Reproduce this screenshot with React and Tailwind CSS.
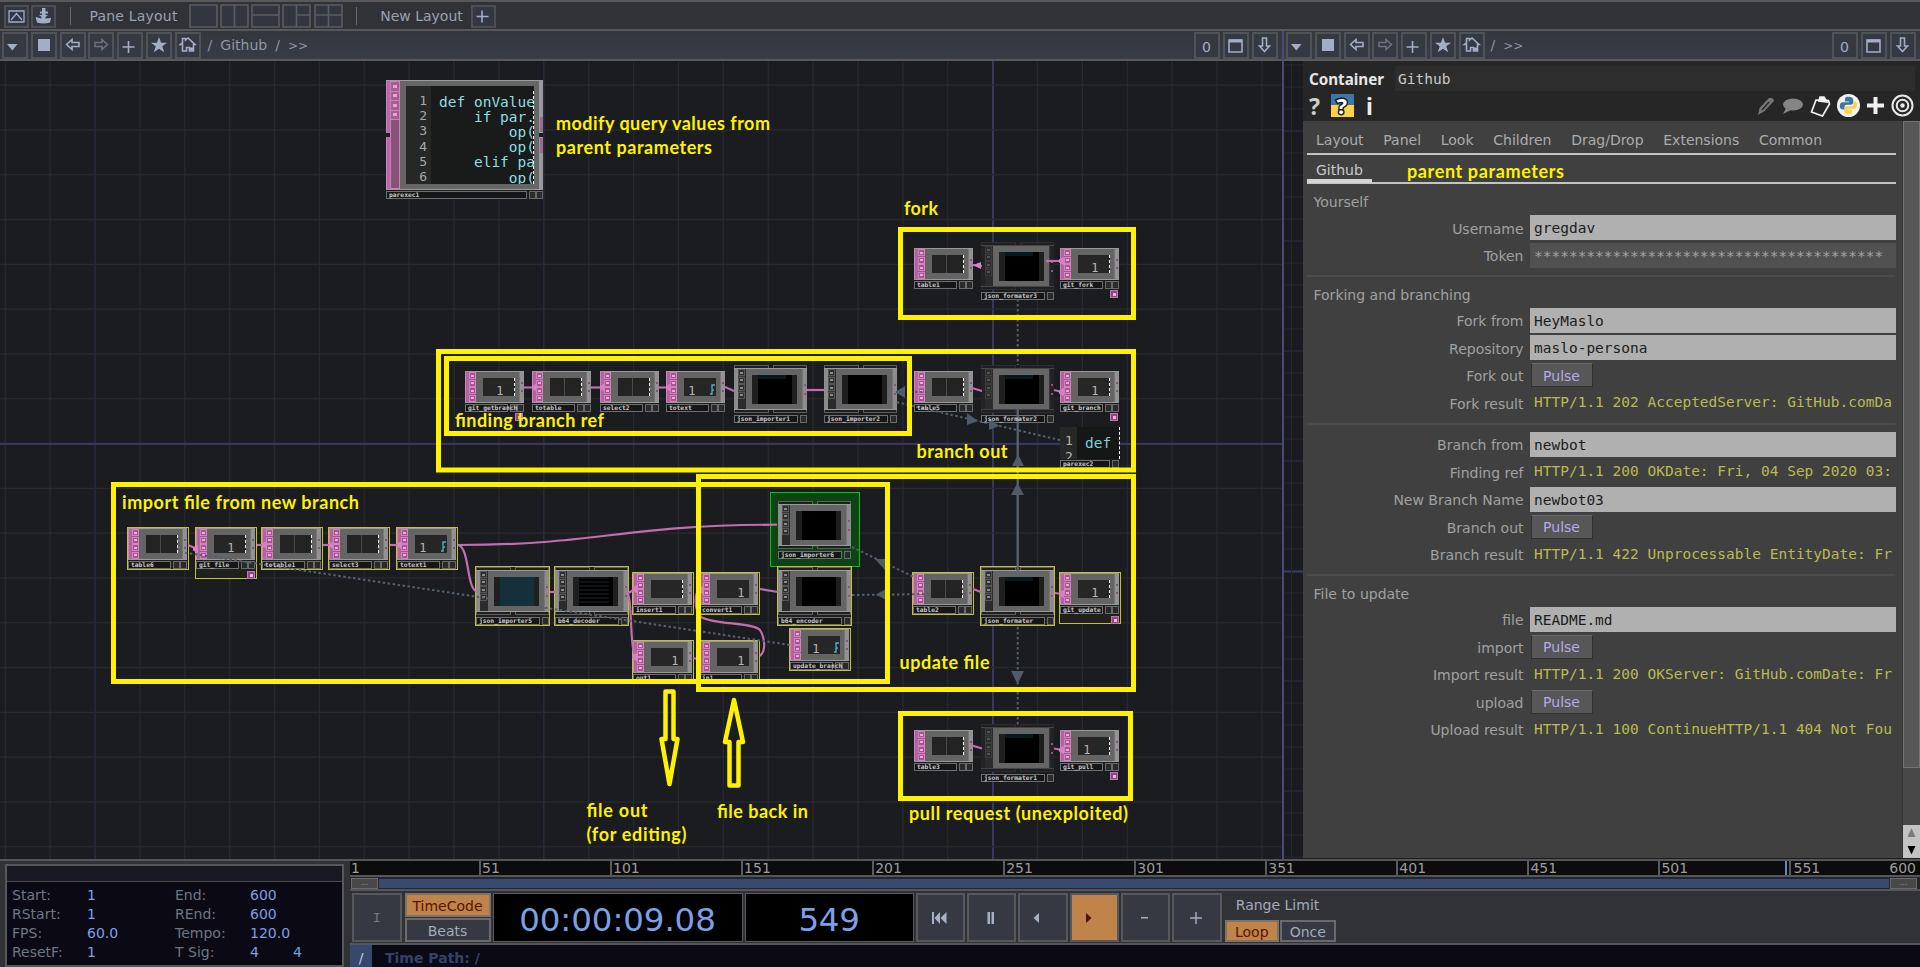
import React from "react";

const SANS = "font-['DejaVu_Sans',sans-serif]";
const MONO = "font-['DejaVu_Sans_Mono',monospace]";

/* ---------- toolbar pieces ---------- */

function Btn({ children, className = "" }) {
  return (
    <div className={`flex h-[27px] w-[26px] shrink-0 items-center justify-center border-2 border-[#50525a] bg-[#363942] text-[#a3adc6] ${className}`}>
      {children}
    </div>
  );
}

const Ico = ({ children, w = 20, h = 20 }) => (
  <svg width={w} height={h} viewBox={`0 0 ${w} ${h}`} className="block shrink-0" fill="none" stroke="currentColor" strokeWidth="1.6">
    {children}
  </svg>
);

const TriDown = () => <Ico><path d="M2 9h10.500l-5.200 6.500z" fill="currentColor" stroke="none" /></Ico>;
const Square = () => <Ico><path d="M4 4h12v12H4z" fill="currentColor" stroke="none" /></Ico>;
const ArrowL = () => <Ico><path d="M3.5 9.500l5.500-5v3H16v4H9v3z" /></Ico>;
const ArrowR = () => <Ico><path d="M16.500 9.500L11 4.500v3H4v4h7v3z" stroke="#6c7180" /></Ico>;
const ArrowD = () => <Ico><path d="M9.500 16.500l-5-5.500h3V3h4v8h3z" /></Ico>;
const Plus = () => <Ico><path d="M8.500 6v12M2.500 12h12" /></Ico>;
const Star = () => <Ico><path d="M10 2l2.100 5.700h6l-4.800 3.600 1.900 6L10 13.700 4.800 17.300l1.900-6L1.900 7.700h6z" fill="currentColor" stroke="none" /></Ico>;
const Home = () => <Ico><path d="M4.500 9.500V16h4v-3.500h3V16h4V9.500h1.500L10 3 7.500 5V3.500h-3V8l-2 1.500z" /><path d="M12 12.500h3.500v3H12z" fill="currentColor" stroke="none" /></Ico>;
const Win = () => <Ico><path d="M3 5h13v12H3z" /><path d="M3 6h13" strokeWidth="3" /></Ico>;
const Zero = () => <span className="pt-[3px] pr-[2px] text-[14px] leading-none font-['DejaVu_Sans',sans-serif]">0</span>;

function PathBar({ className, children }) {
  return (
    <div className={`flex h-[30px] items-center justify-between border-b-2 border-[#5a5a5c] bg-gradient-to-b from-[#33363c] to-[#393c45] ${className}`}>
      <div className="flex items-center gap-[2.800px]">
        <Btn><TriDown /></Btn>
        <Btn><Square /></Btn>
        <Btn><ArrowL /></Btn>
        <Btn><ArrowR /></Btn>
        <Btn><Plus /></Btn>
        <Btn><Star /></Btn>
        <Btn><Home /></Btn>
        {children}
      </div>
      <div className="flex items-center gap-[2.800px]">
        <Btn><Zero /></Btn>
        <Btn><Win /></Btn>
        <Btn><ArrowD /></Btn>
      </div>
    </div>
  );
}

const LayoutIcon = ({ d }) => (
  <svg width="29" height="24" viewBox="0 0 29 24" className="block" fill="#33363e" stroke="#5a5c60" strokeWidth="1.600">
    <path d="M1 1h27v22H1z" />
    <path d={d} fill="none" />
  </svg>
);

function TopBar() {
  return (
    <div className="flex h-[31px] items-center border-t-2 border-b-2 border-[#58585a] bg-[#313236] pt-px pl-[4px] text-[14px] text-[#9ba1b1]">
      <div className="flex gap-[2px]">
        <div className="flex h-[23px] w-[25px] items-center justify-center border-2 border-[#4c4e54] bg-[#34373f] text-[#a3adc6]">
          <svg width="17" height="13" viewBox="0 0 17 13" fill="none" stroke="currentColor" strokeWidth="1.300">
            <path d="M1 1h15v11H1zM3 10l5.500-6.500L14 10" />
          </svg>
        </div>
        <div className="flex h-[23px] w-[25px] items-center justify-center border-2 border-[#4c4e54] bg-[#34373f] text-[#a3adc6]">
          <svg width="17" height="16" viewBox="0 0 17 16" fill="currentColor">
            <path d="M7 0h3.500v3.500H13v2h-2.500V7H13l-2.500 2v1.500L16 10l-1 4.500q-6.500 2-13 0L0.500 9l6 1.500V9L4 7h3V5.500H5v-2h2z" />
          </svg>
        </div>
      </div>
      <div className="ml-[14px] h-[18px] w-px bg-[#66686e]" />
      <span className="ml-[18.500px] w-[99px] whitespace-nowrap tracking-[0.200px]">Pane Layout</span>
      <div className="flex gap-[2.300px]">
        <LayoutIcon d="" />
        <LayoutIcon d="M14.500 1v22" />
        <LayoutIcon d="M1 11h27" />
        <LayoutIcon d="M14.500 1v22M14.500 11H28" />
        <LayoutIcon d="M14.500 1v22M1 11h27" />
      </div>
      <div className="ml-[13px] h-[18px] w-px bg-[#66686e]" />
      <span className="ml-[23.500px] w-[90.500px] whitespace-nowrap">New Layout</span>
      <div className="flex h-[23px] w-[25px] items-center justify-center border-2 border-[#4c4e54] bg-[#34373f] text-[#a3adc6]">
        <svg width="14" height="14" viewBox="0 0 14 14" stroke="currentColor" strokeWidth="1.600"><path d="M6 1.500v12M0.500 7.500h12" /></svg>
      </div>
    </div>
  );
}

/* ---------- network editor ---------- */

const range = (n) => Array.from({ length: n }, (_, i) => i);

function Grid() {
  return (
    <svg width="1282" height="798" viewBox="0 61 1282 798" className="absolute inset-0">
      {range(29).map((i) => (
        <rect key={"v" + i} x={4.600 + i * 44.880} y="61" width={i === 22 ? 2 : 1.300} height="798" fill={i === 22 ? "#383860" : i % 10 === 2 ? "#2c2c44" : "#28292f"} />
      ))}
      {range(18).map((i) => (
        <rect key={"h" + i} x="0" y={84.500 + i * 44.800} width="1282" height={i === 8 ? 2 : 1.300} fill={i === 8 ? "#393964" : "#28292f"} />
      ))}
    </svg>
  );
}

function FlagCells({ pink, h = 32 }) {
  return (
    <div className={`flex w-[7px] flex-col justify-around ${pink ? "bg-[#a3578f]" : "bg-[#3a3a3a]"}`} style={{ height: h }}>
      {range(4).map((i) => (
        <div key={i} className={`flex h-[7px] w-[7px] items-center justify-center border ${pink ? "border-[#d681c2] bg-[#a3578f]" : "border-[#565656] bg-[#2d2d2d]"}`}>
          <div className={`h-[2px] w-[3px] ${pink ? "bg-[#efa6dd]" : "bg-[#8a8a8a]"}`} />
        </div>
      ))}
    </div>
  );
}

function NameBar({ name, w, single }) {
  return (
    <div className="flex h-[8px] justify-between" style={{ width: w }}>
      <div className="h-[8px] w-0 flex-1 border border-[#6f6f6f] bg-[#161618] pl-[2px]">
        <div className={`relative z-10 text-[6.300px] leading-[5px] font-bold whitespace-nowrap text-[#c9c9c9] ${MONO}`}>{name}</div>
      </div>
      <div className="ml-[2px] h-[8px] w-[7px] border border-[#6a6a6a] bg-[#2a2a2a]" />
      {!single && <div className="h-[8px] w-[7px] border border-[#6a6a6a] bg-[#2a2a2a]" />}
    </div>
  );
}

function Screen({ type }) {
  if (type === "table")
    return (
      <div className="flex h-[18px] w-[32px] gap-px bg-[#4a4a4a]">
        <div className="h-full w-[14px] bg-[#232323]" />
        <div className="h-full flex-1 bg-[#232323]" />
        <div className="-ml-px h-full border-l border-dashed border-white" />
      </div>
    );
  return (
    <div className={`flex h-[18px] w-[32px] items-end justify-end bg-[#262626] text-[12px] leading-[9px] text-[#b8b8b8] ${MONO}`}>
      {type === "one" && <span className="mr-[10px]">1</span>}
      {type === "oneMid" && <span className="mr-[18px]">1</span>}
      {type === "onePlain" && <span className="mr-[4px]">1</span>}
      {type === "cyan" && (
        <>
          <span className="mr-[13px]">1</span>
          <svg width="6" height="12" viewBox="0 0 6 12" fill="none" stroke="#4fb7c9" strokeWidth="1.300" className="mr-px self-end"><path d="M6 1H3v4M5 6H3v4H1" /></svg>
        </>
      )}
      {(type === "one" || type === "oneMid" || type === "blank") && <span className="h-full border-l border-dashed border-white" />}
    </div>
  );
}

function DatNode({ n }) {
  const body = (
    <div className="w-[59px]">
      <div className="mb-px flex h-[32px] w-[59px] border-t border-b border-[#9a9a9a] bg-[#646464]">
        <div className="h-[30px] w-[4px] border-l border-[#d37fc0] bg-[#b065a0]" />
        <FlagCells pink h={30} />
        <div className="flex flex-1 items-center justify-center pl-[2px]"><Screen type={n.type} /></div>
        <div className="h-[30px] w-[5px] border-l border-[#777] bg-[#929292] pt-[10px]">
          <div className="ml-px h-[2px] w-[2px] bg-[#8b4f7b]" />
          <div className="mt-[6px] ml-px h-[2px] w-[2px] bg-[#8b4f7b]" />
        </div>
      </div>
      <NameBar name={n.name} w={59} />
    </div>
  );
  return (
    <>
      {n.sel ? (
        <div className="absolute border border-[#c4c131] bg-[#20211e]" style={{ left: n.x - 2, top: n.y - 63, width: 62, height: n.badge ? 52 : 43 }}>
          {body}
        </div>
      ) : (
        <div className="absolute" style={{ left: n.x, top: n.y - 61 }}>{body}</div>
      )}
      {n.badge && (
        <div className="absolute flex h-[8px] w-[8px] items-center justify-center border border-[#c276b0] bg-[#8a4c7c]" style={{ left: n.x + 50, top: n.y + 42 - 61 }}>
          <div className="h-[3px] w-[3px] bg-[#f0b2e2]" />
        </div>
      )}
    </>
  );
}

function CompNode({ n }) {
  const side = n.dark ? "bg-[#232325] border-[#343436]" : "bg-[#8c8c8c] border-[#777]";
  const cap = n.dark ? "border-[#2e2e30] bg-[#1f1f21]" : "border-[#5e5e5e] bg-[#1f1f21]";
  const body = (
    <div className="w-[73px]">
      <div className="flex h-[3px] gap-[4px]">
        <div className={`h-[3px] flex-1 border border-b-0 ${cap}`} />
        <div className={`h-[3px] flex-1 border border-b-0 ${cap}`} />
      </div>
      <div className={`flex h-[42px] border-t border-b ${n.dark ? "border-[#454547] bg-[#2b2b2d]" : "border-[#9a9a9a] bg-[#2b2b2d]"}`}>
        <div className={`h-full w-[4px] ${side}`} />
        <div className="w-[8px]">{n.dark ? <div className="h-[28px] opacity-40"><FlagCells h={30} /></div> : <FlagCells h={30} />}</div>
        <div className="flex flex-1 items-center justify-center bg-[#656565]">
          <div className="flex h-[29px] w-[45px] items-center justify-center bg-[#1f1f1f]">
            <div className={`ml-[2px] h-[29px] w-[34px] ${n.fill === "teal" ? "bg-[#14303a]" : "bg-black"}`}>
              {n.fill === "hint" && <div className="h-[4px] w-[28px] bg-[#08191e]" />}
              {n.fill === "text" && <div className="h-[26px] w-[30px] bg-[repeating-linear-gradient(#0d1317_0_2px,#000_2px_4px)]" />}
            </div>
          </div>
        </div>
        <div className={`flex h-full w-[5px] flex-col items-center justify-center gap-[7px] border-l ${side}`}>
          <div className="h-[2px] w-[2px] bg-[#9a4f86]" />
          <div className="h-[2px] w-[2px] bg-[#9a4f86]" />
        </div>
      </div>
      <div className="mb-[2px] flex h-[3px] gap-[4px]">
        <div className={`h-[3px] flex-1 border border-t-0 ${cap}`} />
        <div className={`h-[3px] flex-1 border border-t-0 ${cap}`} />
      </div>
      <NameBar name={n.name} w={73} single />
    </div>
  );
  if (n.sel)
    return (
      <div className="absolute h-[60px] w-[75px] border border-[#c4c131] bg-[#20211e]" style={{ left: n.x - 1, top: n.y - 62 }}>{body}</div>
    );
  if (n.green)
    return (
      <div className="absolute h-[75px] w-[90px] border border-[#06c414] bg-[#0c4413] pt-[8px] pl-[7px]" style={{ left: n.x - 8, top: n.y - 69 }}>{body}</div>
    );
  return <div className="absolute" style={{ left: n.x, top: n.y - 61 }}>{body}</div>;
}

const DATS = [
  { name: "table1", x: 914, y: 248, type: "table" },
  { name: "git_fork", x: 1060, y: 248, type: "one", badge: true },
  { name: "table5", x: 914, y: 371, type: "table" },
  { name: "git_branch", x: 1060, y: 371, type: "one", badge: true },
  { name: "git_getbranch", x: 465, y: 371, type: "one", badge: true },
  { name: "totable", x: 532, y: 371, type: "table" },
  { name: "select2", x: 600, y: 371, type: "table" },
  { name: "totext", x: 666, y: 371, type: "cyan" },
  { name: "table6", x: 129, y: 529, type: "table", sel: true },
  { name: "git_file", x: 197, y: 529, type: "one", sel: true, badge: true },
  { name: "totable1", x: 263, y: 529, type: "table", sel: true },
  { name: "select3", x: 330, y: 529, type: "table", sel: true },
  { name: "totext1", x: 398, y: 529, type: "cyan", sel: true },
  { name: "insert1", x: 634, y: 574, type: "blank", sel: true },
  { name: "convert1", x: 700, y: 574, type: "onePlain", sel: true },
  { name: "out1", x: 634, y: 642, type: "onePlain", sel: true },
  { name: "in1", x: 700, y: 642, type: "onePlain", sel: true },
  { name: "update_branch", x: 791, y: 630, type: "cyan", sel: true },
  { name: "table2", x: 914, y: 574, type: "table", sel: true },
  { name: "git_update", x: 1061, y: 574, type: "one", sel: true, badge: true },
  { name: "table3", x: 914, y: 730, type: "table" },
  { name: "git_pull", x: 1060, y: 730, type: "oneMid", badge: true },
];

const COMPS = [
  { name: "json_formater3", x: 981, y: 242, dark: true, fill: "hint" },
  { name: "json_formater2", x: 981, y: 365, dark: true, fill: "hint" },
  { name: "json_importer1", x: 734, y: 365, fill: "hint" },
  { name: "json_importer2", x: 824, y: 365 },
  { name: "json_importer5", x: 476, y: 567, sel: true, fill: "teal" },
  { name: "b64_decoder", x: 555, y: 567, sel: true, fill: "text" },
  { name: "json_importer6", x: 778, y: 500, green: true },
  { name: "b64_encoder", x: 778, y: 567, sel: true },
  { name: "json_formater", x: 981, y: 567, sel: true, fill: "hint" },
  { name: "json_formater1", x: 981, y: 724, dark: true, fill: "hint" },
];

const PINK_WIRES = [
  "M972 265L982 266", "M1046 261H1061", "M972 388L982 391", "M1054 390L1062 392",
  "M524 387.500H535", "M591 387.500H602", "M659 387.500H669", "M725 387L734 391", "M806 390H824",
  "M188 545L197 549", "M257 545H265", "M323 545H332", "M390 545H400",
  "M458 545C600 545 620 525 777 524.700",
  "M458 545C470 548 466 588 477 592",
  "M550 592H556", "M627 594L635 589", "M628 594C632 600 630 650 635 656",
  "M693 658L702 660",
  "M760 656C767 650 764 636 760 630C752 622 715 625 701 617C694 610 694 592 700 589",
  "M760 589L778 592", "M973 589L981 592", "M1055 593L1062 594",
  "M972 745.500L982 748.500", "M1054 748.500L1062 750",
];

function Wires() {
  return (
    <svg width="1282" height="798" viewBox="0 61 1282 798" className="absolute inset-0" fill="none">
      {PINK_WIRES.map((d) => <path key={d} d={d} stroke="#c06fae" strokeWidth="2.200" />)}
      <path d="M973 265l8-3v7z" fill="#d781c4" />
      {[[1064, 261], [1064, 392], [537, 387.500], [605, 387.500], [671, 387.500], [198, 549], [267, 545], [334, 545], [402, 545], [1064, 594], [1064, 750], [637, 589], [637, 657], [703, 590]].map(([x, y]) => (
        <path key={x + "-" + y} d={`M${x - 5} ${y - 1.5}L${x} ${y - 4}v8L${x - 5} ${y + 1.5}z`} fill="#d781c4" />
      ))}
      <g stroke="#55606e" strokeWidth="2" strokeDasharray="2.500 2.500">
        <path d="M1017.700 299V365M1017.700 627V725" />
        <path d="M1060 440L896 402M910 392H932" />
        <path d="M180 552L492 599M540 607L790 645" />
        <path d="M852 547L914 577M852 595L932 594" />
      </g>
      <path d="M1017.700 405V571" stroke="#5a6675" strokeWidth="2.200" />
      <g fill="#4f5b6a">
        <path d="M1012 466h12l-6-12zM1011 495h13l-6.500-12zM1011 671h13l-6.500 13z" />
        <path d="M967 413v12l11-4zM989 418v12l10-4zM895 392l10-6v12z" />
        <path d="M875 559h11l-1 11zM876 594.500l9-5v10z" />
      </g>
    </svg>
  );
}

function ParExec1() {
  const lines = ["def onValue", "    if par.", "        op(", "        op(", "    elif pa", "        op("];
  return (
    <div className="absolute top-[19px] left-[386px] w-[157px]">
      <div className="mb-px flex h-[110px] border-t border-b border-[#9b9b9b] bg-[#666]">
        <div className="w-[4px] border-l border-[#cf7fbd] bg-[#b569a5]" />
        <div className="w-[10px] border border-[#d17fbe] bg-[#855377]">
          {range(4).map((i) => (
            <div key={i} className="flex h-[9.500px] items-center justify-center border-b border-[#d17fbe] bg-[#a3608f]">
              <div className="h-[3px] w-[4px] bg-[#e5a2d5]" />
            </div>
          ))}
        </div>
        <div className="flex flex-1 items-center pl-[6px]">
          <div className={`relative flex h-[98px] w-[128px] overflow-hidden bg-[#191a1a] text-[14.500px] leading-[15.200px] ${MONO}`}>
            <div className="w-[25px] shrink-0 bg-[#262727] pt-[7px] pr-[4px] text-right text-[13px] text-[#a9a9a9]">
              {lines.map((_, i) => <div key={i}>{i + 1}</div>)}
            </div>
            <div className="pt-[8.500px] pl-[8px] whitespace-pre text-[#8edfe2]">
              {lines.map((l, i) => <div key={i}>{l}</div>)}
            </div>
            <div className="absolute top-[5px] right-0 h-[93px] border-l border-dashed border-white" />
          </div>
        </div>
        <div className="flex w-[4px] flex-col items-center gap-[6px] bg-[#9a9a9a] pt-[36px]">
          <div className="h-[15px] w-[3px] bg-[#9a6a8d]" />
          <div className="h-[15px] w-[3px] bg-[#9a6a8d]" />
        </div>
      </div>
      <NameBar name="parexec1" w={157} />
      <div className="absolute top-[53px] left-0 h-[4px] w-[4px] bg-[#1b1c1f]" />
      <div className="absolute top-[53px] right-0 h-[4px] w-[4px] bg-[#1b1c1f]" />
    </div>
  );
}

function ParExec2() {
  return (
    <div className="absolute top-[366px] left-[1060px] h-[41px] w-[60px] overflow-hidden">
      <div className={`mb-px flex h-[32px] bg-[#151616] ${MONO}`}>
        <div className="h-[32px] w-[17px] shrink-0 overflow-hidden bg-[#262727] pt-[6px] pl-[5px] text-[13px] leading-[16px] text-[#b5b5b5]">
          <div>1</div>
          <div>2</div>
        </div>
        <div className="flex-1 pt-[6px] pl-[8px] text-[14.500px] leading-[20px] text-[#7fcfd4]">def</div>
        <div className="border-l border-dashed border-white" />
      </div>
      <NameBar name="parexec2" w={59} single />
    </div>
  );
}

const BOXES = [
  [898, 227, 238, 93], [436, 349, 700, 123.5], [444, 356, 468, 80],
  [111, 482, 779, 202], [696, 474, 440, 218], [898, 711, 235, 90],
];

const NOTES = [
  ["modify query values from", 556, 130, 214], ["parent parameters", 556, 154, 156], ["fork", 904, 215, 34],
  ["finding branch ref", 455, 427, 149], ["branch out", 916.5, 458, 91],
  ["import file from new branch", 122, 509, 237], ["update file", 899.5, 669, 90],
  ["pull request (unexploited)", 909, 820, 219], ["file out", 586.5, 817, 61],
  ["(for editing)", 586.5, 841, 100], ["file back in", 717, 818, 91],
];

function Annotations() {
  return (
    <svg width="1282" height="798" viewBox="0 61 1282 798" className="absolute inset-0 z-20" fill="none" stroke="#fff200">
      {BOXES.map(([x, y, w, h]) => <rect key={x + "-" + y} x={x + 2.5} y={y + 2.5} width={w - 5} height={h - 5} strokeWidth="5" />)}
      <path d="M665.500 691.500h8V739h4L669.500 784L661.500 739h4z" strokeWidth="4.500" strokeLinejoin="round" />
      <path d="M729.500 785.500h9V742h4.500L734 700L725 742h4.500z" strokeWidth="4.500" strokeLinejoin="round" />
      {NOTES.map(([t, x, y, w]) => (
        <text key={t + x + y} x={x} y={y} textLength={w} stroke="none" className="fill-[#fff200] font-['Lato',sans-serif] text-[18px] font-bold">{t}</text>
      ))}
    </svg>
  );
}

function Network() {
  return (
    <div className="relative h-[798px] w-[1282px] shrink-0 overflow-hidden bg-[#1b1c1f]">
      <Grid />
      <ParExec1 />
      {DATS.map((n) => <DatNode key={n.name} n={n} />)}
      {COMPS.map((n) => <CompNode key={n.name} n={n} />)}
      <ParExec2 />
      <div className="absolute top-[618px] left-[630px] z-10 h-[6px] w-[134px] bg-[#1b1c1f]" />
      <Wires />
      <Annotations />
    </div>
  );
}

/* ---------- parameter panel ---------- */

const SideGrid = () => (
  <svg width="19" height="797" viewBox="1284 62 19 797" className="block shrink-0 bg-[#1a1b20]">
    {range(37).map((i) => (
      <rect key={i} x="1284" y={65.5 + i * 22} width="19" height={i === 23 ? 2 : 1} fill={i === 23 ? "#3c3c66" : i % 5 === 3 ? "#2e2e4c" : "#26272d"} />
    ))}
    <rect x="1291" y="62" width="1" height="797" fill="#26272d" />
  </svg>
);

function Row({ label, children }) {
  return (
    <div className="flex h-[27.500px] items-center">
      <div className="w-[216.500px] shrink-0 pt-[2px] text-right leading-[20px] whitespace-nowrap">{label}</div>
      <div className="ml-[6.500px] w-[366px] shrink-0">{children}</div>
    </div>
  );
}

const Field = ({ v }) => (
  <Row label={v[0]}>
    <div className={`h-[25px] overflow-hidden bg-[#b0b0b0] pl-[4px] text-[14.500px] leading-[26px] text-[#1c1c1c] ${MONO}`}>{v[1]}</div>
  </Row>
);
const Result = ({ v }) => (
  <Row label={v[0]}>
    <div className={`pl-[4px] text-[14.500px] leading-[25px] whitespace-nowrap text-[#b9bb52] ${MONO}`}>{v[1]}</div>
  </Row>
);
const Pulse = ({ label }) => (
  <Row label={label}>
    <div className="ml-[0.500px] flex h-[24px] w-[62px] items-center justify-center border border-t-[#6b6b6b] border-r-[#303030] border-b-[#303030] border-l-[#303030] bg-[#575757] pt-[2px] text-[#b6a8ec]">Pulse</div>
  </Row>
);
const Sep = () => <div className="mt-[6px] h-[2px] w-[588px] bg-[#4b4b4b]" />;

function PyLogo({ size }) {
  return (
    <svg width={size} height={size} viewBox="0 0 24 24" className="block">
      <path d="M12 1C7 1 7.500 3.500 7.500 5v2H13v1H5C2 8 1 10 1 12.500S2.500 17 5 17h2v-3c0-2 1-3 3-3h5c1.500 0 3-1 3-3V5c0-3-2.500-4-6-4z" fill="#3a76a8" />
      <path d="M12 23c5 0 4.500-2.500 4.500-4v-2H11v-1h8c3 0 4-2 4-4.500S21.500 7 19 7h-1v3c0 2-1 3-3 3h-5c-1.500 0-3 1-3 3v3c0 3 2 4 5 4z" fill="#ffd24a" />
    </svg>
  );
}

function Params() {
  return (
    <div className="flex h-[797px] w-[617px] flex-col bg-[#404040] text-[14px] text-[#a0a0a0]">
      <div className="h-[60px] shrink-0 bg-[#262626]">
        <div className="flex h-[31px] items-center pt-[4px] pl-[6px]">
          <div className="w-[86px] pt-[2px] text-[15.200px] font-bold text-[#e6e6e6] font-['Noto_Sans',sans-serif]">Container</div>
          <div className={`h-[25px] w-[520px] bg-[#2d2d2d] pl-[3px] text-[14.500px] leading-[26px] text-[#c9c9c9] ${MONO}`}>Github</div>
        </div>
        <div className="flex h-[27px] items-center justify-between pr-[6px] pl-[6px]">
          <div className="flex items-center">
            <span className="w-[22px] text-[23px] leading-[24px] font-bold text-[#cfcfcf] font-['Noto_Sans',sans-serif]">?</span>
            <div className="flex h-[23px] w-[23px] items-center justify-center bg-gradient-to-b from-[#3b77a8] from-50% to-[#ffd24a] to-50%">
              <svg width="23" height="23" viewBox="0 0 23 23"><text x="5.500" y="19.500" strokeWidth="3" stroke="#1a1a1a" paintOrder="stroke" className="fill-white text-[22px] font-bold font-['Noto_Sans',sans-serif]">?</text></svg>
            </div>
            <span className="ml-[12px] text-[23px] leading-[24px] font-bold text-[#ededed] font-['Noto_Sans',sans-serif]">i</span>
          </div>
          <div className="flex items-center gap-[6px]">
            <svg width="18" height="20" viewBox="0 0 18 20" fill="#757575"><path d="M1 19l1.500-7L12 2q4-1 5 3L7 15.500z" /><path d="M5 14l7-8" stroke="#262626" strokeWidth="1.400" /></svg>
            <svg width="23" height="18" viewBox="0 0 23 18" fill="#858585"><ellipse cx="12" cy="7.500" rx="10" ry="6" /><path d="M5 11l-3 6 8-4z" /></svg>
            <svg width="21" height="22" viewBox="0 0 21 22" fill="none" stroke="#f0f0f0" strokeWidth="1.700"><path d="M6 5L1.500 17l11 4L19.500 9l-1-3.500z" /><path d="M9 6l1-4h4l3 5z" fill="#f0f0f0" /></svg>
            <div className="flex h-[23px] w-[23px] items-center justify-center rounded-full bg-[#f2f2f2]"><PyLogo size={19} /></div>
            <svg width="19" height="19" viewBox="0 0 19 19" stroke="#f0f0f0" strokeWidth="4"><path d="M9.500 1v17M1 9.500h17" /></svg>
            <svg width="23" height="23" viewBox="0 0 23 23" fill="none" stroke="#e8e8e8" strokeWidth="2"><circle cx="11.500" cy="11.500" r="10" /><circle cx="11.500" cy="11.500" r="5.800" /><circle cx="11.500" cy="11.500" r="2.200" fill="#e8e8e8" stroke="none" /></svg>
          </div>
        </div>
      </div>
      <div className="flex min-h-0 flex-1 justify-between">
        <div className="w-[593px] pl-[4px]">
          <div className="flex h-[34px] items-center gap-[19.700px] border-b-2 border-[#c4c4c4] pt-[6px] pl-[9px] text-[#acacac]">
            {["Layout", "Panel", "Look", "Children", "Drag/Drop", "Extensions", "Common"].map((t) => <span key={t}>{t}</span>)}
          </div>
          <div className="flex h-[29px] border-b-2 border-[#c4c4c4]">
            <div className="h-[28px] w-[65px] border-b-4 border-[#d4d4d4] pt-[5px] pl-[9px] text-[#c9c9c9]">Github</div>
            <div className="pt-[4px] pl-[34px]">
              <svg width="160" height="24" viewBox="0 0 160 24" className="block"><text x="1" y="19" textLength="157" className="fill-[#fff200] font-['Lato',sans-serif] text-[18px] font-bold">parent parameters</text></svg>
            </div>
          </div>
          <div className="pt-[8px] pl-[6.500px] leading-[20px]">Yourself</div>
          <div className="h-[2px]" />
          <Field v={["Username", "gregdav"]} />
          <Row label="Token">
            <div className={`h-[25px] overflow-hidden bg-[#515151] pl-[4px] text-[14.500px] leading-[26px] text-[#a4a4a4] ${MONO}`}>{"*".repeat(40)}</div>
          </Row>
          <Sep />
          <div className="h-[29.500px] pt-[8px] pl-[6.500px] leading-[20px]">Forking and branching</div>
          <Field v={["Fork from", "HeyMaslo"]} />
          <Field v={["Repository", "maslo-persona"]} />
          <Pulse label="Fork out" />
          <Result v={["Fork result", "HTTP/1.1 202 AcceptedServer: GitHub.comDa"]} />
          <Sep />
          <div className="h-[6px]" />
          <Field v={["Branch from", "newbot"]} />
          <Result v={["Finding ref", "HTTP/1.1 200 OKDate: Fri, 04 Sep 2020 03:"]} />
          <Field v={["New Branch Name", "newbot03"]} />
          <Pulse label="Branch out" />
          <Result v={["Branch result", "HTTP/1.1 422 Unprocessable EntityDate: Fr"]} />
          <Sep />
          <div className="h-[29.500px] pt-[8px] pl-[6.500px] leading-[20px]">File to update</div>
          <Field v={["file", "README.md"]} />
          <Pulse label="import" />
          <Result v={["Import result", "HTTP/1.1 200 OKServer: GitHub.comDate: Fr"]} />
          <Pulse label="upload" />
          <Result v={["Upload result", "HTTP/1.1 100 ContinueHTTP/1.1 404 Not Fou"]} />
        </div>
        <div className="flex w-[18px] flex-col justify-between border-l border-[#353535] bg-[#484848]">
          <div className="h-[647px] w-[17px] border border-[#747474] bg-[#575757]" />
          <div className="flex h-[33px] w-[17px] flex-col items-center justify-around bg-[#c3c3c3]">
            <svg width="11" height="10" viewBox="0 0 11 10"><path d="M5.500 0L9.500 9h-8z" fill="#7d7d7d" /></svg>
            <svg width="11" height="10" viewBox="0 0 11 10"><path d="M5.500 9.500L9.500 1h-8z" fill="#000" /></svg>
          </div>
        </div>
      </div>
    </div>
  );
}

/* ---------- timeline ---------- */

function Stats() {
  const rows = [["Start:", "1", "End:", "600"], ["RStart:", "1", "REnd:", "600"], ["FPS:", "60.0", "Tempo:", "120.0"], ["ResetF:", "1", "T Sig:", "4", "4"]];
  return (
    <div className="h-[108px] w-[350px] shrink-0 border-t-2 border-[#56565a] bg-[#313236] pt-[3px] pl-[5px]">
      <div className="h-[103px] w-[339px] border-2 border-[#58585a] bg-[#0b0a14]">
        <div className="h-[16px] border-b border-[#4c4c50] bg-[#191922]" />
        <div className="pt-[4px] pl-[5px] text-[14px] leading-[19.100px] text-[#6f7683]">
          {rows.map((r) => (
            <div key={r[0]} className="flex">
              <span className="w-[75px]">{r[0]}</span>
              <span className="w-[88px] text-[#7c9fe6]">{r[1]}</span>
              <span className="w-[75px]">{r[2]}</span>
              <span className="w-[43px] text-[#7c9fe6]">{r[3]}</span>
              <span className="text-[#7c9fe6]">{r[4]}</span>
            </div>
          ))}
        </div>
      </div>
    </div>
  );
}

function TBtn({ children, active }) {
  return (
    <div className={`flex h-[49px] w-[49.300px] items-center justify-center border-2 border-[#56585c] pr-[2px] pt-[2px] ${active ? "bg-[#c0834a] text-[#5a0d00]" : "bg-[#363941] text-[#a7b0c5]"}`}>{children}</div>
  );
}

function Timeline() {
  return (
    <div className="flex h-[108px] w-[1570px] flex-col">
      <div className="flex h-[18px] shrink-0 border-t-2 border-b-2 border-[#55555a] bg-[#0c0c0c] text-[14px] leading-[15px] text-[#9c9c9c]">
        <span className="w-[129px] pl-px">1</span>
        {["51", "101", "151", "201", "251", "301", "351", "401", "451", "501"].map((t) => (
          <span key={t} className="w-[131.050px] border-l-2 border-[#5c5c5c] pl-px">{t}</span>
        ))}
        <span className="-ml-[4px] mr-[2px] w-[2px] bg-[#6a86bb]" />
        <span className="flex flex-1 justify-between border-l-2 border-[#5c5c5c] pr-[4px] pl-[2px]"><span>551</span><span>600</span></span>
      </div>
      <div className="flex h-[14px] shrink-0 items-center justify-between border-b-2 border-[#55555a] bg-[#25262b] px-px">
        <div className="flex h-[11px] w-[27px] items-center justify-center border border-[#6a6a6a] bg-[#484848] text-[8px] leading-none text-[#8a8a8a]">...</div>
        <div className="mx-[1px] h-[9px] flex-1 bg-[#394a70]" />
        <div className="mr-[2px] flex h-[11px] w-[27px] items-center justify-center border border-[#6a6a6a] bg-[#484848] text-[8px] leading-none text-[#8a8a8a]">...</div>
      </div>
      <div className="flex h-[54px] shrink-0 items-center border-b-2 border-[#55555a] bg-[#313236] pl-[2px] text-[14px] text-[#a3a9b9]">
        <div className="flex h-[49px] w-[49.500px] items-center justify-center border-2 border-[#56585c] bg-[#363941] pt-[2px] text-[12px] text-[#777c88] font-['DejaVu_Sans_Mono',monospace]">I</div>
        <div className="ml-[3px] flex w-[86px] flex-col gap-px">
          <div className="flex h-[24px] items-center justify-center border-2 border-[#7c7468] bg-[#c0834a] pt-[3px] text-[#5a1400]">TimeCode</div>
          <div className="flex h-[24px] items-center justify-center border-2 border-[#6a6a6c] bg-[#363941] pt-[4px]">Beats</div>
        </div>
        <div className="ml-[2px] flex h-[49px] w-[250px] items-center justify-center border border-[#56585c] bg-black pt-[6px] text-[32.500px] tracking-[-0.100px] text-[#7c9fe6]">00:00:09.08</div>
        <div className="mr-[2px] ml-[2px] flex h-[49px] w-[169px] items-center justify-center border border-[#56585c] bg-black pt-[6px] text-[32.500px] tracking-[-0.300px] text-[#7c9fe6]">549</div>
        <div className="flex gap-[2.100px]">
          <TBtn><svg width="16" height="12" viewBox="0 0 16 12" fill="currentColor"><path d="M1 0h2v12H1zM9 0v12L3.500 6zM15.500 0v12L9.500 6z" /></svg></TBtn>
          <TBtn><svg width="8" height="12" viewBox="0 0 8 12" fill="currentColor"><path d="M0.500 0h2.500v12H0.500zM4.500 0H7v12H4.500z" /></svg></TBtn>
          <TBtn><svg width="10" height="10" viewBox="0 0 10 10" fill="currentColor" className="mr-[10px]"><path d="M7 0v10L1.500 5z" /></svg></TBtn>
          <TBtn active><svg width="10" height="10" viewBox="0 0 10 10" fill="currentColor" className="mr-[8px]"><path d="M2 0v10L7.500 5z" /></svg></TBtn>
          <TBtn><svg width="8" height="2" viewBox="0 0 8 2" fill="currentColor"><path d="M0 0h7v1.500H0z" /></svg></TBtn>
          <TBtn><svg width="12" height="12" viewBox="0 0 12 12" stroke="currentColor" strokeWidth="1.400"><path d="M6 0v12M0 6h12" /></svg></TBtn>
        </div>
        <div className="ml-[3px] flex h-[50px] flex-col justify-between">
          <span className="pt-[3px] pl-[11px] whitespace-nowrap">Range Limit</span>
          <div className="flex gap-px">
            <div className="flex h-[22px] w-[54px] items-center justify-center border-2 border-[#7c7468] bg-[#c0834a] pt-[3px] text-[#5a1400]">Loop</div>
            <div className="flex h-[22px] w-[56px] items-center justify-center border-2 border-[#6a6a6c] bg-[#363941] pt-[3px]">Once</div>
          </div>
        </div>
      </div>
      <div className="flex flex-1 items-center bg-[#0b0a14] text-[14px]">
        <div className="flex h-full w-[22px] items-center justify-center bg-[#38476e] pt-[3px] text-[#c3c9da]">/</div>
        <span className="pt-[3px] pl-[13px] font-bold text-[#34426a]">Time Path: /</span>
      </div>
    </div>
  );
}

export default function App() {
  return (
    <div className={`flex h-[967px] w-[1920px] flex-col overflow-hidden bg-[#1b1c1f] ${SANS}`}>
      <TopBar />
      <div className="flex h-[828px] shrink-0">
        <div className="w-[1282px]">
          <PathBar className="w-[1282px] pr-[4px] pl-[2px]">
            <div className="flex items-center gap-[8px] pl-[4px] text-[14px] text-[#8f95a3]"><span>/</span><span>Github</span><span>/</span><span className="pt-[2px] text-[12px]">&gt;&gt;</span></div>
          </PathBar>
          <Network />
        </div>
        <div className="w-[2px] bg-[#4a4a78]" />
        <div className="w-[636px]">
          <PathBar className="w-[636px] pr-[4px] pl-[2px]">
            <div className="flex items-center gap-[8px] pl-[3px] text-[14px] text-[#8f95a3]"><span>/</span><span className="pt-[2px] text-[12px]">&gt;&gt;</span></div>
          </PathBar>
          <div className="flex">
            <SideGrid />
            <Params />
          </div>
        </div>
      </div>
      <div className="flex h-[108px] shrink-0">
        <Stats />
        <Timeline />
      </div>
    </div>
  );
}
